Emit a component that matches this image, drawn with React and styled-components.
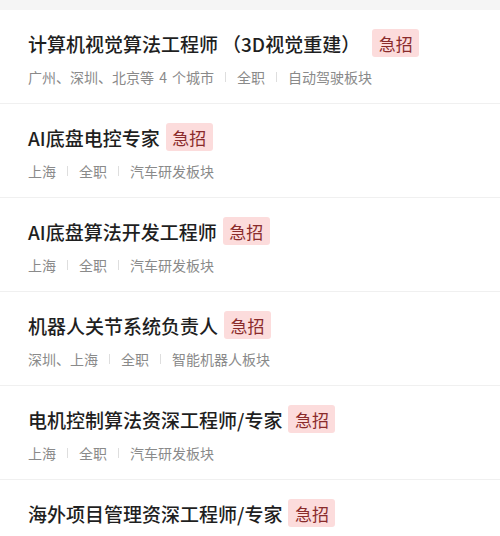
import styled, { createGlobalStyle } from "styled-components";

const GlobalStyle = createGlobalStyle`
  html, body {
    margin: 0;
    padding: 0;
    background: #ffffff;
  }
  body {
    font-family: "Noto Sans CJK SC", "Noto Sans", sans-serif;
  }
`;

const jobs = [
  {
    title: "计算机视觉算法工程师 （3D视觉重建）",
    meta: ["广州、深圳、北京等 4 个城市", "全职", "自动驾驶板块"],
  },
  { title: "AI底盘电控专家", meta: ["上海", "全职", "汽车研发板块"] },
  { title: "AI底盘算法开发工程师", meta: ["上海", "全职", "汽车研发板块"] },
  { title: "机器人关节系统负责人", meta: ["深圳、上海", "全职", "智能机器人板块"] },
  { title: "电机控制算法资深工程师/专家", meta: ["上海", "全职", "汽车研发板块"] },
  { title: "海外项目管理资深工程师/专家", meta: [] },
];

const Page = styled.div`
  width: 500px;
  height: 536px;
  overflow: hidden;
  background: #fff;
`;

const TopStrip = styled.div`
  height: 10px;
  background: #f5f5f5;
`;

const Row = styled.div`
  padding: 19px 28px 16px;
  border-bottom: 1px solid #f0f0f0;
`;

const TitleLine = styled.div`
  display: flex;
  align-items: center;
  gap: 6px;
  height: 28px;
`;

const Title = styled.span`
  font-size: 19px;
  font-weight: 500;
  color: #1f1f1f;
  white-space: nowrap;
`;

const Wide = styled.span`
  margin-left: 4px;
  margin-right: 6px;
`;

const Badge = styled.span`
  height: 28px;
  padding: 0 6.5px;
  display: inline-flex;
  align-items: center;
  background: #fcdcdc;
  color: #8a2b2b;
  font-size: 17px;
  border-radius: 3px;
`;

const Meta = styled.div`
  display: flex;
  align-items: center;
  margin-top: 10px;
  height: 20px;
  font-size: 14px;
  color: #8a8a8a;
  white-space: nowrap;
`;

const Sep = styled.span`
  width: 1px;
  height: 10px;
  background: #dedede;
  margin: 0 11px;
`;

const Spaced = styled.span`
  word-spacing: 2px;
`;

export default function App() {
  return (
    <Page>
      <GlobalStyle />
      <TopStrip />
      {jobs.map((job, i) => {
        const [head, ...rest] = job.title.split(" ");
        return (
          <Row key={i}>
            <TitleLine>
              <Title>
                {head}
                {rest.length > 0 && <Wide>{rest.join(" ")}</Wide>}
              </Title>
              <Badge>急招</Badge>
            </TitleLine>
            {job.meta.length > 0 && (
              <Meta>
                {job.meta.map((m, j) => (
                  <span key={j} style={{ display: "contents" }}>
                    {j > 0 && <Sep />}
                    <Spaced>{m}</Spaced>
                  </span>
                ))}
              </Meta>
            )}
          </Row>
        );
      })}
    </Page>
  );
}
